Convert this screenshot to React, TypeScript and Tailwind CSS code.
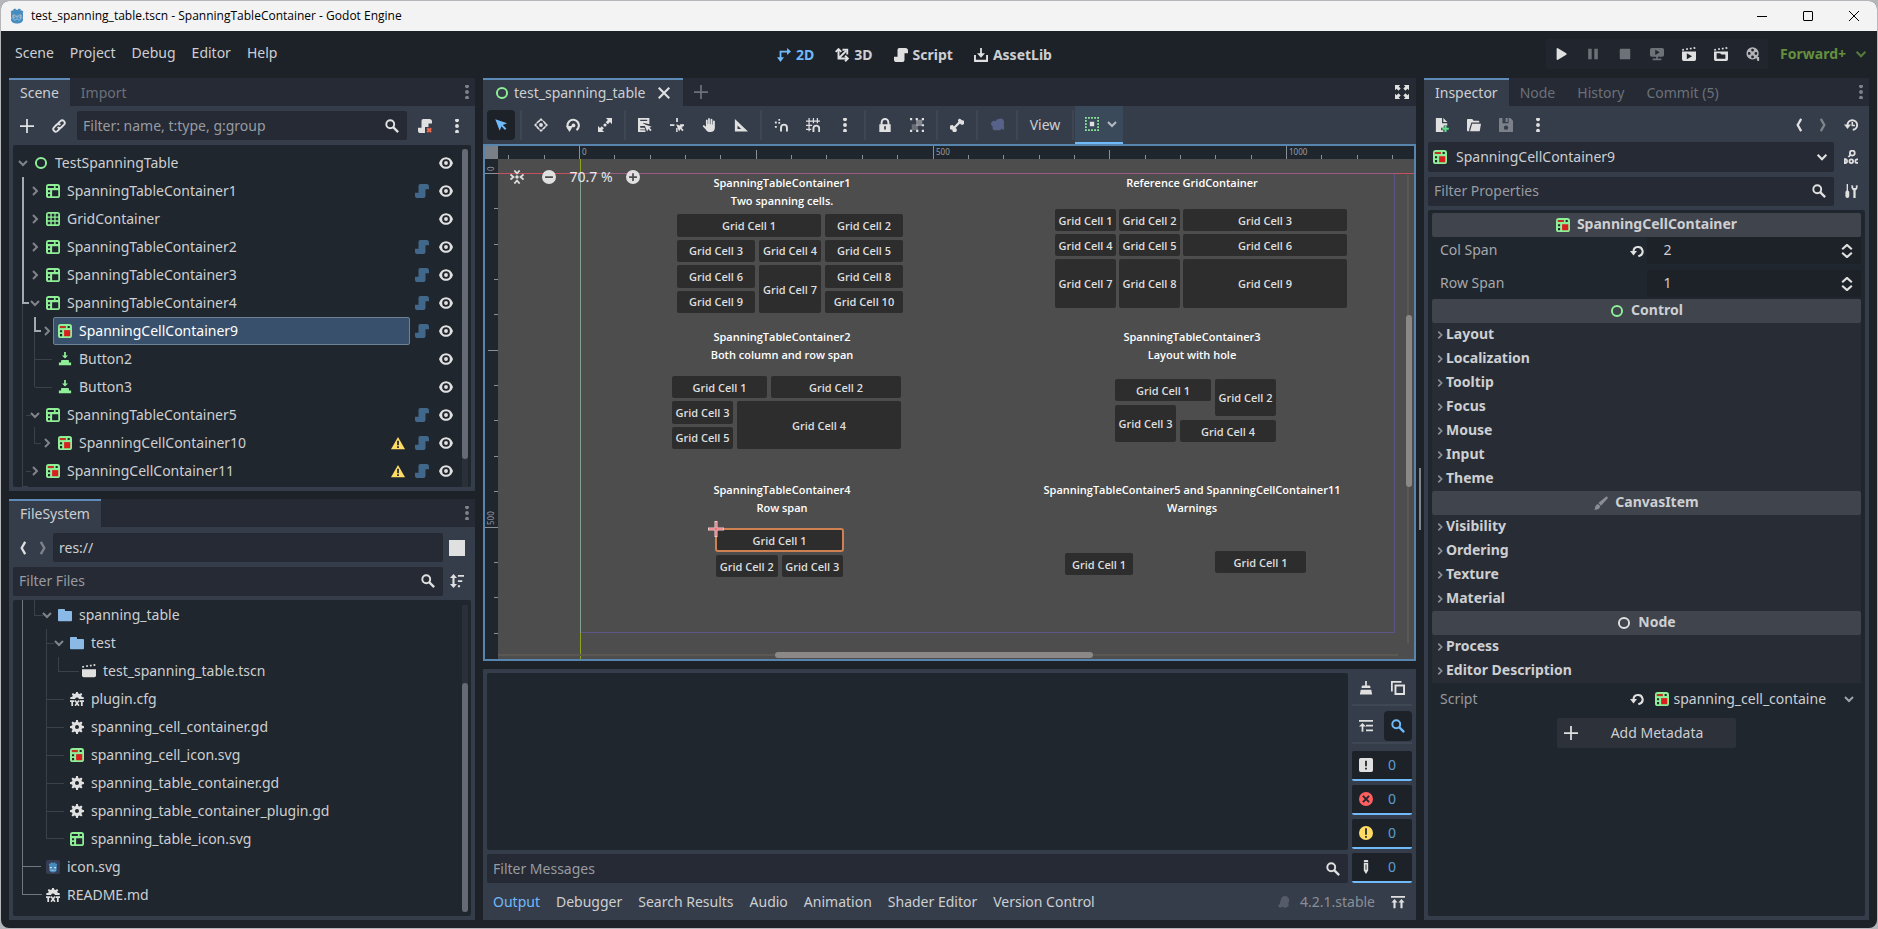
import { useState } from 'react';
import type { ReactNode } from 'react';
import clsx from 'clsx';

const GREEN = '#8eef97';
const LIGHT = '#e0e0e0';

const gear =
  'M7 0h2l.5 2.200 1.400.6 1.900-1.200 1.500 1.500-1.200 1.900.6 1.400L16 7v2l-2.300.6-.6 1.400 1.200 1.900-1.500 1.500-1.900-1.200-1.400.6L9 16H7l-.5-2.200-1.400-.6-1.900 1.200-1.500-1.500 1.200-1.900-.6-1.400L0 9V7l2.300-.6.6-1.400-1.200-1.900 1.500-1.500 1.900 1.200 1.400-.6zM8 5.700a2.300 2.300 0 1 0 0 4.600 2.300 2.300 0 0 0 0-4.600z';
const scroll = 'M6 0a2 2 0 0 0-2 2v8H0v3a3 3 0 0 0 3 3h6a3 3 0 0 0 3-3V6h4V3a3 3 0 0 0-3-3z';
const cursor = 'M7 7l3.500 8.500 1.200-3 2.600 2.600 1.300-1.300-2.600-2.600 2.700-1.200z';
const clapperTop = 'M0 2.600l2-.5.5 1.800-2 .5zM4.500 1.600l2-.4.4 1.800-2 .5zM8.800 1l2-.3.4 1.900-2 .3zM13 .4l2-.3.4 1.900-2 .3z';
const tableFrame = 'M3 0h10a3 3 0 0 1 3 3v10a3 3 0 0 1-3 3H3a3 3 0 0 1-3-3V3a3 3 0 0 1 3-3z';

const icons: Record<string, ReactNode> = {
  add: <path d="M7 0v7H0v2h7v7h2V9h7V7H9V0z" />,
  link: (
    <g fill="none" stroke="currentColor" strokeWidth="2.200" strokeLinecap="round">
      <path d="M7 5l2.600-2.600a2.900 2.900 0 0 1 4.100 4.100L10.800 9.400a2.900 2.900 0 0 1-3.600.4" />
      <path d="M9 11l-2.600 2.600a2.900 2.900 0 0 1-4.100-4.100L5.200 6.600a2.900 2.900 0 0 1 3.600-.4" />
    </g>
  ),
  search: (
    <g fill="none" stroke="currentColor">
      <circle cx="6" cy="6" r="4.500" strokeWidth="2.200" />
      <path d="M9 9l6 6" strokeWidth="2.600" />
    </g>
  ),
  scriptX: (
    <>
      <path d="M6 0a2 2 0 0 0-2 2v8H0v3a3 3 0 0 0 3 3h5V9h4V5h4V3a3 3 0 0 0-3-3z" />
      <path d="M10.500 10.500l4.500 4.500m0-4.500L10.500 15" stroke="#f0694e" strokeWidth="2.400" />
    </>
  ),
  dots: (
    <>
      <circle cx="8" cy="1.500" r="2.200" />
      <circle cx="8" cy="8" r="2.200" />
      <circle cx="8" cy="14.500" r="2.200" />
    </>
  ),
  script: <path d={scroll} />,
  eye: (
    <>
      <path
        fillRule="evenodd"
        d="M8 1.300c-3.700 0-6.700 2.500-8 6.700 1.300 4.200 4.300 6.700 8 6.700s6.700-2.500 8-6.700c-1.300-4.200-4.300-6.700-8-6.700zM8 3.600a4.400 4.400 0 1 1 0 8.800 4.400 4.400 0 0 1 0-8.800z"
      />
      <circle cx="8" cy="8" r="2.200" />
    </>
  ),
  warning: (
    <>
      <path d="M8 1L0 15h16z" fill="#ffdd65" />
      <path d="M7 5.500h2v5H7zM7 11.800h2v1.800H7z" fill="#20262d" />
    </>
  ),
  chevronDown: <path d="M3 5.500l5 5 5-5" fill="none" stroke="currentColor" strokeWidth="2.400" />,
  back: <path d="M10.500 1L6.500 8l4 7" fill="none" stroke="currentColor" strokeWidth="2.600" />,
  forward: <path d="M5.500 1l4 7-4 7" fill="none" stroke="currentColor" strokeWidth="2.600" />,
  control: <circle cx="8" cy="8" r="5.800" fill="none" stroke="currentColor" strokeWidth="2.200" />,
  table: (
    <>
      <path d={tableFrame} fill={GREEN} />
      <path d="M2 2.300h7v2.400H2zM11 2.300h2.700v2.400H11zM2.300 7h2.400v2.400H2.300zM2.300 11.500h2.400v2.400H2.300zM7 7h7v7H7z" fill="#20262d" />
    </>
  ),
  cell: (
    <>
      <path d={tableFrame} fill={GREEN} />
      <path d="M2 2.300h7v2.400H2z" fill="#c03423" />
      <path d="M11 2.300h2.400v2.400H11zM2.300 7h2.400v2.400H2.300zM2.300 11.500h2.400v2.400H2.300z" fill="#20262d" />
      <path d="M7 7h7v7H7z" fill="#d81e1e" />
    </>
  ),
  grid: (
    <>
      <path d={tableFrame} fill={GREEN} />
      <path
        d="M2 2h3v3H2zM6.500 2h3v3h-3zM11 2h3v3h-3zM2 6.500h3v3H2zM6.500 6.500h3v3h-3zM11 6.500h3v3h-3zM2 11h3v3H2zM6.500 11h3v3h-3zM11 11h3v3h-3z"
        fill="#20262d"
      />
    </>
  ),
  button: <path d="M7 0h2v4h2.500L8 7.500 4.500 4H7zM4.500 9h7a1 1 0 0 1 1 1v2h-9v-2a1 1 0 0 1 1-1zM1 12h14v3H1z" fill={GREEN} />,
  folder: <path d="M1 1h6a1 1 0 0 1 1 1v1.500h7a1 1 0 0 1 1 1V14a1 1 0 0 1-1 1H1a1 1 0 0 1-1-1V2a1 1 0 0 1 1-1z" fill="#8bb9e5" />,
  scene: (
    <>
      <path d="M0 6h16v7a2 2 0 0 1-2 2H2a2 2 0 0 1-2-2z" />
      <path d={clapperTop} />
    </>
  ),
  gear: <path d={gear} fillRule="evenodd" />,
  config: (
    <>
      <path d="M7 0h2l.4 1.800 1.600.6L12.700 1 14 2.500l-1.200 1.700.6 1.300 2.300.4V8h-5.500a2.300 2.300 0 0 0-4.400 0H.3V5.900l2.300-.4.6-1.300L2 2.500 3.300 1 5 2.400l1.600-.6z" />
      <path d="M0 9.500h5v2H3.500V16h-2v-4.500H0zM11 9.500h5v2h-1.500V16h-2v-4.500H11z" />
      <path d="M5.800 9.800l4.400 6M10.200 9.800l-4.400 6" stroke="currentColor" strokeWidth="1.800" />
    </>
  ),
  godotFile: (
    <>
      <rect width="16" height="16" rx="2" fill="#363d52" />
      <path
        d="M6.500 2.500l.8 1h1.400l.8-1 1.300.6v1.200l1.200-.3.900 1.200-.6 1v5c0 2-2.200 3-4.300 3s-4.300-1-4.300-3v-5l-.6-1L4 4l1.200.3V3.100z"
        fill="#478cbf"
      />
      <path d="M4.500 8h2v1.500h-2zM9.500 8h2v1.500h-2zM5 11h1.500v1H5zM7.300 11h1.400v1.300H7.300zM9.600 11H11v1H9.600z" fill="#dfe9f2" />
    </>
  ),
  sort: (
    <>
      <path d="M4 0l4 4.500H5.200v7H8L4 16l-4-4.500h2.800v-7H0z" />
      <path d="M9 1h7v2.200H9zM9 7h5v2.200H9zM9 12.800h2.500V15H9z" />
    </>
  ),
  twoD: <path d="M3 10.500V3h8.500V0L16 4l-4.500 4V5H5v5.500h3L4 16l-4-5.500z" />,
  threeD: (
    <g fill="none" stroke="currentColor" strokeWidth="2.200">
      <path d="M4 1.500V12h10.500M4 12l9-9" />
      <path d="M.8 4.500L4 1.300l3.200 3.200M11.500 8.800l3.200 3.200-3.200 3.200M8.500 2h5.500v5.500" />
    </g>
  ),
  assetLib: <path d="M7 0h2v6h3.500L8 11 3.500 6H7zM0 8h2.200v5.500h11.600V8H16v7a1 1 0 0 1-1 1H1a1 1 0 0 1-1-1z" />,
  play: <path d="M3 2.300v11.400a1 1 0 0 0 1.500.8l9.500-5.700a1 1 0 0 0 0-1.600L4.500 1.500A1 1 0 0 0 3 2.300z" />,
  pause: <path d="M2.500 2h4v12h-4zM9.500 2h4v12h-4z" />,
  stop: <rect x="2" y="2" width="12" height="12" rx="1" />,
  remote: (
    <path
      fillRule="evenodd"
      d="M2 1h12a2 2 0 0 1 2 2v6a2 2 0 0 1-2 2H9v2h4v2H3v-2h4v-2H2a2 2 0 0 1-2-2V3a2 2 0 0 1 2-2zM6 3v6l5-3z"
    />
  ),
  playScene: (
    <>
      <path d={clapperTop} />
      <path fillRule="evenodd" d="M0 5h16v9a2 2 0 0 1-2 2H2a2 2 0 0 1-2-2zM5.500 7v7l6-3.500z" />
    </>
  ),
  playCustom: (
    <>
      <path d={clapperTop} />
      <path fillRule="evenodd" d="M0 5h16v9a2 2 0 0 1-2 2H2a2 2 0 0 1-2-2zM3 7v6.500h10V8.500H8.500L7 7z" />
    </>
  ),
  movie: (
    <>
      <path
        fillRule="evenodd"
        d="M7.500.3a7 7 0 1 1 0 14 7 7 0 0 1 0-14zM7.500 2a1.600 1.600 0 1 0 0 3.200 1.600 1.600 0 0 0 0-3.200zM3.700 5.800a1.600 1.600 0 1 0 0 3.200 1.600 1.600 0 0 0 0-3.200zM11.300 5.800a1.600 1.600 0 1 0 0 3.200 1.600 1.600 0 0 0 0-3.200zM7.500 9.700a1.600 1.600 0 1 0 0 3.200 1.600 1.600 0 0 0 0-3.200z"
      />
      <path d="M11.500 11.500H15V16h-2z" />
    </>
  ),
  close: <path d="M2 2l12 12m0-12L2 14" stroke="currentColor" strokeWidth="2.400" />,
  expand: (
    <path d="M0 0h6L4.200 1.800 6.500 4 4 6.500 1.800 4.200 0 6zM16 0v6l-1.800-1.800L12 6.500 9.500 4l2.300-2.200L10 0zM0 16v-6l1.800 1.800L4 9.500 6.500 12l-2.300 2.200L6 16zM16 16h-6l1.800-1.800L9.500 12 12 9.500l2.200 2.300L16 10z" />
  ),
  select: <path d="M1.500 1.500l5 13 2-5 4 4.200 1.700-1.700-4.200-4 5-2z" />,
  move: (
    <>
      <circle cx="8" cy="8" r="2.200" />
      <path d="M8 0l2.800 3H5.200zM8 16l2.800-3H5.200zM0 8l3-2.800v5.600zM16 8l-3-2.800v5.600z" />
      <circle cx="8" cy="8" r="5" fill="none" stroke="currentColor" strokeWidth="1.800" strokeDasharray="4 3.850" strokeDashoffset="-1.900" />
    </>
  ),
  rotate: (
    <>
      <path d="M4 13.500A6.500 6.500 0 1 1 12 13.800" fill="none" stroke="currentColor" strokeWidth="2.400" />
      <path d="M0 9h8l-4 7z" />
      <circle cx="8.500" cy="8.500" r="2.200" />
    </>
  ),
  scale: (
    <>
      <path d="M9 0h7v7l-2.300-2.300-2.500 2.500-2.400-2.400 2.500-2.500zM0 9l2.300 2.300 2-2 2.400 2.400-2 2L7 16H0z" />
      <circle cx="8" cy="8" r="1.800" />
    </>
  ),
  listSelect: (
    <>
      <path fillRule="evenodd" d="M0 0h13v7L6 5.500v1h1.500L8.500 9H2.500v2h5l.8 2H2.500v1h6v2H0zM2.500 2v1.500h8V2z" />
      <path d={cursor} />
    </>
  ),
  pivot: (
    <>
      <path d="M7 0h2v4.500H7zM0 7h5v2H0zM11.500 7H16v2h-4.500zM7 11.500h1.700V16H7z" />
      <path d={cursor} />
    </>
  ),
  hand: (
    <path d="M7 1a1 1 0 0 1 2 0v6h.7V2a1.100 1.100 0 0 1 2.200 0v5.500h.6V4a1.100 1.100 0 0 1 2.200 0v7c0 3-2 5-5.200 5-2.500 0-4-1-5.200-3L1 9.800C.5 8.700 1.800 7.800 2.800 8.600L4.500 10V2.500a1.200 1.200 0 0 1 2 0V7H7z" />
  ),
  ruler: <path fillRule="evenodd" d="M1 1l15 14.500H1zM4 8.500v4h4.200z" />,
  snap: (
    <>
      <path d="M5 1h2v2H5zM1 4h2.200v2.200H1zM5 4.500h2v2H5zM1 9h2.200v2.200H1z" />
      <path d="M8 15.500V11a3.200 3.200 0 0 1 6.800 0v4.500" fill="none" stroke="currentColor" strokeWidth="2.200" />
    </>
  ),
  gridSnap: (
    <>
      <path d="M3.500 0v15M8.500 0v6M13 0v6M0 3.500h16M0 8.500h7M0 13h6" fill="none" stroke="currentColor" strokeWidth="1.400" />
      <path d="M8.500 16v-4a3.300 3.300 0 0 1 6.600 0v4" fill="none" stroke="currentColor" strokeWidth="2.200" />
    </>
  ),
  lock: (
    <path
      fillRule="evenodd"
      d="M8 0a5 5 0 0 0-5 5v2H1.500v9h13V7H13V5a5 5 0 0 0-5-5zm0 2.200A2.800 2.800 0 0 1 10.800 5v2H5.200V5A2.800 2.800 0 0 1 8 2.200zM7 9.500h2v3.500H7z"
    />
  ),
  group: (
    <>
      <path d="M7 2h7v7H7z" opacity=".45" />
      <path d="M2 7h7v7H2z" opacity=".3" />
      <path d="M0 0h2.500v2.500H0zM13.500 0H16v2.500h-2.500zM0 13.500h2.500V16H0zM13.500 13.500H16V16h-2.500zM6.500 0H9v2.500H6.500zM13.500 7H16v2.500h-2.500zM7 13.500h2.500V16H7z" />
    </>
  ),
  bone: (
    <path d="M10.500.8a2.600 2.600 0 0 0-.8 3.600L4.500 9.600a2.600 2.600 0 1 0-1.800 3.600 2.600 2.600 0 1 0 3.600-1.800l5.200-5.200a2.600 2.600 0 1 0 1.800-3.600A2.600 2.600 0 0 0 10.500.8z" />
  ),
  camera: (
    <path d="M10 1a4 4 0 0 0-3.700 2.700A3.200 3.200 0 1 0 3 9.500V12a2 2 0 0 0 2 2h6a2 2 0 0 0 2-2l3 2V7.500l-2.500 1.500A4 4 0 0 0 10 1z" />
  ),
  anchors: (
    <>
      <path d="M5.500 5.500h5v5h-5z" fill={LIGHT} />
      <g fill="none" stroke={GREEN} strokeWidth="2" strokeDasharray="2 1.500">
        <path d="M0 1h16M0 15h16M1 0v16M15 0v16" />
      </g>
    </>
  ),
  centerView: (
    <>
      <circle cx="8" cy="8" r="2" />
      <g fill="none" stroke="currentColor" strokeWidth="2">
        <path d="M5 .5l3 3.500 3-3.500M5 15.500L8 12l3 3.500M.5 5L4 8l-3.500 3M15.500 5L12 8l3.500 3" />
      </g>
    </>
  ),
  minus: <path fillRule="evenodd" d="M8 0a8 8 0 1 1 0 16A8 8 0 0 1 8 0zM3.500 7v2h9V7z" />,
  plus: <path fillRule="evenodd" d="M8 0a8 8 0 1 1 0 16A8 8 0 0 1 8 0zM7 3.500V7H3.500v2H7v3.500h2V9h3.500V7H9V3.500z" />,
  newFile: (
    <>
      <path d="M1 0h7v6h6v2.500h-4V11H7v3h2.500v2H1zM9.500 0L14 4.500H9.500z" />
      <path d="M10.800 8.500h2.400v2.600h2.600v2.400h-2.600V16h-2.400v-2.500H8.300v-2.400h2.500z" fill="#5fdb8a" />
    </>
  ),
  open: <path d="M1 1h5l1.500 2H13a1 1 0 0 1 1 1v1H5L2.500 13V15H1a1 1 0 0 1-1-1V2a1 1 0 0 1 1-1zM5.800 6.500H16L14.500 15H3.500z" />,
  save: (
    <path
      fillRule="evenodd"
      d="M1 0h3v6h7V0h2l3 3v12a1 1 0 0 1-1 1H1a1 1 0 0 1-1-1V1a1 1 0 0 1 1-1zM7.500 0H10v4.500H7.500zM8 8.500a2.500 2.500 0 1 0 0 5 2.500 2.500 0 0 0 0-5z"
    />
  ),
  history: (
    <>
      <path d="M4 9V8a5.500 5.500 0 1 1 6 5.500" fill="none" stroke="currentColor" strokeWidth="2.200" />
      <path d="M0 7.500h8L4 12.500z" />
      <path d="M9.500 4.500v4h3" fill="none" stroke="currentColor" strokeWidth="1.800" />
    </>
  ),
  docs: (
    <>
      <g fill="none" stroke="currentColor" strokeWidth="2">
        <circle cx="9.500" cy="3.500" r="2.800" />
        <path d="M7.500 5.500L5 8" />
      </g>
      <g fill="none" stroke="currentColor" strokeWidth="2">
        <path d="M1 10.500h.800a2.300 2.300 0 0 1 0 4.500H1zM16 10.800h-1a2 2 0 0 0 0 4h1" />
        <circle cx="8.300" cy="12.800" r="2.100" />
      </g>
    </>
  ),
  tools: (
    <>
      <path d="M3 0h1.600v7.500a2.500 2.500 0 0 1 1.400 2v4.300a2.200 2.200 0 0 1-4.400 0V9.500a2.500 2.500 0 0 1 1.400-2z" />
      <path d="M8.500 1v3a3.300 3.300 0 0 0 2.200 3V16h2.600V7a3.300 3.300 0 0 0 2.200-3V1l-2 1v2.500h-3V2z" />
    </>
  ),
  revert: (
    <>
      <path d="M4 9V8.500a5.200 5.200 0 1 1 7 5L9.500 14" fill="none" stroke="currentColor" strokeWidth="2.400" />
      <path d="M0 8h8l-4 5z" />
    </>
  ),
  updown: <path d="M2.500 6L8 1l5.500 5M2.500 10L8 15l5.500-5" fill="none" stroke="currentColor" strokeWidth="2.400" />,
  brush: (
    <path
      d="M14 .5a1.500 1.500 0 0 1 1.500 2.300L8 11 5 8zM4.500 9L7 11.500c0 3-2.500 4.500-7 4 1.500-1 1-2 1.500-3.500S3 9.500 4.500 9z"
      fill="#8a8d93"
    />
  ),
  broom: <path d="M7 0h2v5h2.500a1.500 1.500 0 0 1 1.500 1.500V8H3V6.500A1.500 1.500 0 0 1 4.500 5H7zM2 10h12l1 5.500H1z" />,
  copy: <path fillRule="evenodd" d="M0 0h12v2H2v10H0zM4 4h12v12H4zM6.200 6.200v7.600h7.600V6.200z" />,
  collapse: <path d="M0 1h16v2.200H0zM8 6.500h8v2H8zM8 12h8v2H8zM3 14.500V8.500H0L4 4.500l4 4H5v6z" />,
  msgStd: (
    <path fillRule="evenodd" d="M2 0h12a2 2 0 0 1 2 2v12a2 2 0 0 1-2 2H2a2 2 0 0 1-2-2V2a2 2 0 0 1 2-2zM7 3v6.500h2V3zM7 11v2h2v-2z" />
  ),
  msgError: (
    <>
      <circle cx="8" cy="8" r="8" fill="#ff5f5f" />
      <path d="M4.500 4.500l7 7m0-7l-7 7" stroke="#20262d" strokeWidth="2.200" />
    </>
  ),
  msgWarn: (
    <>
      <circle cx="8" cy="8" r="8" fill="#ffdd65" />
      <path d="M7 2.500h2V10H7zM7 11.500h2v2H7z" fill="#20262d" />
    </>
  ),
  msgEdit: (
    <path fillRule="evenodd" d="M6.500 0h3a1 1 0 0 1 1 1v1.500h-5V1a1 1 0 0 1 1-1zM5.500 3.500h5V12L8 16l-2.500-4zM7.500 5v6h1V5z" />
  ),
  bell: <path d="M9 1c2.500 0 4.500 2 5 4l-1 5 .5 2.500-5 2.500-1-1.500-4.500 1L1 12l2-1.500L4.500 5C5 2.500 6.500 1 9 1z" />,
  expandBottom: <path d="M0 1h16v2.200H0zM4 4.500l3.500 4H5.200v6.500H2.800V8.500H.5zM12 4.500l3.500 4h-2.300v6.500h-2.400V8.500H8.500z" />,
};

function Icon({ name, className = 'text-[#e0e0e0]' }: { name: string; className?: string }) {
  return (
    <svg viewBox="0 0 16 16" fill="currentColor" aria-hidden="true" className={clsx('size-[14px] shrink-0', className)}>
      {icons[name]}
    </svg>
  );
}

function IconButton({ name, label, className, iconClass }: { name: string; label: string; className?: string; iconClass?: string }) {
  return (
    <button aria-label={label} className={clsx('flex h-[30px] w-7 shrink-0 items-center justify-center rounded-sm', className)}>
      <Icon name={name} className={iconClass} />
    </button>
  );
}

function SearchField({ id, placeholder }: { id: string; placeholder: string }) {
  return (
    <label htmlFor={id} className="flex h-[29px] min-w-0 flex-1 items-center rounded-xs bg-[#252a34] pr-2 pl-1.5">
      <input
        id={id}
        type="text"
        placeholder={placeholder}
        aria-label={placeholder}
        className="min-w-0 flex-1 bg-transparent outline-none placeholder:text-[#989ba1]"
      />
      <Icon name="search" />
    </label>
  );
}

function DockTabs({ tabs }: { tabs: string[] }) {
  const [active, setActive] = useState(tabs[0]);
  return (
    <div className="flex h-7 shrink-0 items-stretch bg-[#252a34]">
      {tabs.map((tab) => (
        <button
          key={tab}
          onClick={() => setActive(tab)}
          className={clsx(
            'border-t-2 px-[11px] pb-px',
            tab === active ? 'border-[#5f8bb8] bg-[#363d4a] text-[#cdcfd2]' : 'border-transparent text-[#6c7179]',
          )}
        >
          {tab}
        </button>
      ))}
      <button aria-label="Dock menu" className="ml-auto flex w-4 items-center justify-center">
        <Icon name="dots" className="text-[#7f838a]" />
      </button>
    </div>
  );
}

interface TreeItem {
  label: string;
  icon: string;
  depth: number;
  arrow?: 'open' | 'closed';
  script?: boolean;
  warning?: boolean;
  selected?: boolean;
}

const sceneTree: TreeItem[] = [
  { label: 'TestSpanningTable', icon: 'control', depth: 0, arrow: 'open' },
  { label: 'SpanningTableContainer1', icon: 'table', depth: 1, arrow: 'closed', script: true },
  { label: 'GridContainer', icon: 'grid', depth: 1, arrow: 'closed' },
  { label: 'SpanningTableContainer2', icon: 'table', depth: 1, arrow: 'closed', script: true },
  { label: 'SpanningTableContainer3', icon: 'table', depth: 1, arrow: 'closed', script: true },
  { label: 'SpanningTableContainer4', icon: 'table', depth: 1, arrow: 'open', script: true },
  { label: 'SpanningCellContainer9', icon: 'cell', depth: 2, arrow: 'closed', script: true, selected: true },
  { label: 'Button2', icon: 'button', depth: 2 },
  { label: 'Button3', icon: 'button', depth: 2 },
  { label: 'SpanningTableContainer5', icon: 'table', depth: 1, arrow: 'open', script: true },
  { label: 'SpanningCellContainer10', icon: 'cell', depth: 2, arrow: 'closed', script: true, warning: true },
  { label: 'SpanningCellContainer11', icon: 'cell', depth: 1, arrow: 'closed', script: true, warning: true },
];

const fileTree: TreeItem[] = [
  { label: 'spanning_table', icon: 'folder', depth: 2, arrow: 'open' },
  { label: 'test', icon: 'folder', depth: 3, arrow: 'open' },
  { label: 'test_spanning_table.tscn', icon: 'scene', depth: 4 },
  { label: 'plugin.cfg', icon: 'config', depth: 3 },
  { label: 'spanning_cell_container.gd', icon: 'gear', depth: 3 },
  { label: 'spanning_cell_icon.svg', icon: 'cell', depth: 3 },
  { label: 'spanning_table_container.gd', icon: 'gear', depth: 3 },
  { label: 'spanning_table_container_plugin.gd', icon: 'gear', depth: 3 },
  { label: 'spanning_table_icon.svg', icon: 'table', depth: 3 },
  { label: 'icon.svg', icon: 'godotFile', depth: 1 },
  { label: 'README.md', icon: 'config', depth: 1 },
];

function TreeRow({ item, tools }: { item: TreeItem; tools?: boolean }) {
  return (
    <li className="flex h-7 items-center" style={{ paddingLeft: 4 + item.depth * 12 }}>
      <span className="flex w-3 shrink-0 justify-center">
        {item.arrow && (
          <svg viewBox="0 0 12 12" className="size-3 text-[#80858c]" fill="none" stroke="currentColor" strokeWidth="2">
            <path d={item.arrow === 'open' ? 'M2 4l4 4 4-4' : 'M4 2l4 4-4 4'} />
          </svg>
        )}
      </span>
      <button
        className={clsx(
          'flex h-7 min-w-0 flex-1 items-center gap-[7px] rounded-xs border pl-1 whitespace-nowrap',
          item.selected ? 'border-[#6d8195] bg-[#38506b] text-white' : 'border-transparent',
        )}
      >
        <Icon name={item.icon} className={item.icon === 'control' ? 'text-[#8eef97]' : undefined} />
        <span>{item.label}</span>
        {item.warning && (
          <span className="mr-1 ml-auto">
            <Icon name="warning" />
          </span>
        )}
      </button>
      {tools && (
        <span className="flex w-[52px] shrink-0 items-center gap-2.5 pl-[5px]">
          {item.script ? <Icon name="script" className="text-[#41688b]" /> : <span className="w-[14px]" />}
          <Icon name="eye" />
        </span>
      )}
    </li>
  );
}

function SceneDock() {
  return (
    <section className="flex h-[413px] shrink-0 flex-col">
      <DockTabs tabs={['Scene', 'Import']} />
      <div className="flex min-h-0 flex-1 flex-col bg-[#363d4a] px-1 pb-1">
        <div className="flex h-[39px] shrink-0 items-center gap-1">
          <IconButton name="add" label="Add node" />
          <IconButton name="link" label="Instantiate scene" />
          <SearchField id="filter-nodes" placeholder="Filter: name, t:type, g:group" />
          <IconButton name="scriptX" label="Detach script" />
          <IconButton name="dots" label="Scene menu" />
        </div>
        <div className="relative flex min-h-0 flex-1 rounded-xs bg-[#20262d] pt-1">
          <svg className="pointer-events-none absolute inset-0 size-full" fill="none" shapeRendering="crispEdges">
            <g stroke="#3b4149">
              <path d="M9.500 158V342M13 270h5M13 326h5M21.500 186v56M22 214h17M22 242h17M21.500 282v16h6M9 341.500h6" />
            </g>
            <g stroke="#a5a9af" strokeWidth="2">
              <path d="M10 32v126h6M22 172v14h6" />
            </g>
          </svg>
          <ul className="min-w-0 flex-1 overflow-hidden">
            {sceneTree.map((item) => (
              <TreeRow key={item.label} item={item} tools />
            ))}
          </ul>
          <div className="mr-[3px] w-[6px] bg-[#2a3038]">
            <div className="h-[310px] rounded-sm bg-[#666b73]" />
          </div>
        </div>
      </div>
    </section>
  );
}

function FileSystemDock() {
  return (
    <section className="flex min-h-0 flex-1 flex-col">
      <DockTabs tabs={['FileSystem']} />
      <div className="flex min-h-0 flex-1 flex-col gap-1 bg-[#363d4a] px-1 pt-1.5 pb-1">
        <div className="flex items-center">
          <button aria-label="Back" className="flex w-5 justify-center">
            <Icon name="back" />
          </button>
          <button aria-label="Forward" className="flex w-5 justify-center">
            <Icon name="forward" className="text-[#80858c]" />
          </button>
          <input
            type="text"
            aria-label="Path"
            defaultValue="res://"
            className="h-[29px] min-w-0 flex-1 rounded-xs bg-[#252a34] px-1.5 outline-none"
          />
          <button aria-label="Toggle split mode" className="mr-1.5 ml-1.5 size-4 bg-[#e0e0e0]" />
        </div>
        <div className="flex items-center">
          <SearchField id="filter-files" placeholder="Filter Files" />
          <IconButton name="sort" label="Sort files" />
        </div>
        <div className="relative flex min-h-0 flex-1 rounded-xs bg-[#20262d] pt-px">
          <svg className="pointer-events-none absolute inset-0 size-full" fill="none" shapeRendering="crispEdges">
            <g stroke="#3b4149">
              <path d="M21.500 0v15h8M33.500 29v209M33 43h8M45.500 57v14h20M33 99h18M33 127h18M33 155h18M33 183h18M33 211h18M33 238.500h18" />
            </g>
            <path d="M9.500 0v294.500h19M9 266.500h19" stroke="#72767d" />
          </svg>
          <ul className="min-w-0 flex-1 overflow-hidden">
            {fileTree.map((item) => (
              <TreeRow key={item.label} item={item} />
            ))}
          </ul>
          <div className="mt-1 mr-[3px] mb-1 flex w-[6px] flex-col justify-end bg-[#2a3038]">
            <div className="h-[229px] rounded-sm bg-[#666b73]" />
          </div>
        </div>
      </div>
    </section>
  );
}

// Canvas view: 1000 scene units take up 707 px.
const UNIT = 0.707;
const ORIGIN_X = 82;
const ORIGIN_Y = 14;

function TopRuler() {
  const marks = Array.from({ length: 26 }, (_, i) => (i - 2) * 50);
  return (
    <svg className="h-[13px] min-w-0 flex-1 bg-[#1f262d]" shapeRendering="crispEdges">
      {marks.map((m) => {
        const x = Math.round(ORIGIN_X + m * UNIT) - 0.5;
        const top = m % 500 === 0 ? 0 : m % 250 === 0 ? 4 : 9;
        return <path key={m} d={`M${x} ${top}V13`} stroke="#8a9097" />;
      })}
      {[0, 500, 1000].map((m) => (
        <text key={m} x={Math.round(ORIGIN_X + m * UNIT) + 2} y="9" fontSize="8" fill="#9a9fa5">
          {m}
        </text>
      ))}
    </svg>
  );
}

function LeftRuler() {
  const marks = Array.from({ length: 14 }, (_, i) => i * 50);
  return (
    <svg className="w-[13px] shrink-0 bg-[#1f262d]" shapeRendering="crispEdges">
      {marks.map((m) => {
        const y = Math.round(ORIGIN_Y + m * UNIT) + 0.5;
        const left = m % 500 === 0 ? 0 : m % 250 === 0 ? 3 : 9;
        return <path key={m} d={`M${left} ${y}H13`} stroke="#8a9097" />;
      })}
      {[0, 500].map((m) => {
        const y = Math.round(ORIGIN_Y + m * UNIT) - 2;
        return (
          <text key={m} x="9" y={y} fontSize="8" fill="#9a9fa5" transform={`rotate(-90 9 ${y})`}>
            {m}
          </text>
        );
      })}
    </svg>
  );
}

function Cell({ n, className }: { n: number; className?: string }) {
  return (
    <button className={clsx('flex items-center justify-center rounded-xs bg-[#2d2d2d] pt-px whitespace-nowrap text-[#dfdfdf]', className)}>
      Grid Cell {n}
    </button>
  );
}

function Caption({ lines, className }: { lines: string[]; className: string }) {
  return (
    <div className={clsx('absolute w-80 text-center leading-[18px] text-white', className)}>
      {lines.map((line) => (
        <p key={line}>{line}</p>
      ))}
    </div>
  );
}

function Canvas() {
  return (
    <div className="relative min-w-0 flex-1 overflow-hidden bg-[#4d4d4d] font-['Open_Sans',sans-serif] text-[11px] font-semibold">
      <div className="absolute top-[14px] left-[82px] h-[460px] w-[815px] border border-[#5d5585]" />
      <div className="absolute top-[14px] right-0 left-0 h-px bg-[#c8505c]" />
      <div className="absolute top-[14px] left-[82px] h-px w-[815px] bg-[#9c5a86]" />
      <div className="absolute top-0 bottom-0 left-[82px] w-px bg-[#8fa41f]" />
      <div className="absolute top-[14px] left-[82px] h-[460px] w-px bg-[#84a090]" />

      <Caption className="top-[15px] left-[124px]" lines={['SpanningTableContainer1', 'Two spanning cells.']} />
      <div className="absolute top-[55px] left-[179px] grid h-[99px] w-[226px] grid-cols-[78px_62px_78px] grid-rows-4 gap-x-1 gap-y-[3px]">
        <Cell n={1} className="col-span-2" />
        <Cell n={2} />
        <Cell n={3} />
        <Cell n={4} />
        <Cell n={5} />
        <Cell n={6} />
        <Cell n={7} className="row-span-2" />
        <Cell n={8} />
        <Cell n={9} />
        <Cell n={10} />
      </div>

      <Caption className="top-[15px] left-[534px]" lines={['Reference GridContainer']} />
      <div className="absolute top-[50px] left-[557px] grid w-[292px] grid-cols-[61px_61px_164px] grid-rows-[22px_22px_49px] gap-[3px]">
        {[1, 2, 3, 4, 5, 6, 7, 8, 9].map((n) => (
          <Cell key={n} n={n} />
        ))}
      </div>

      <Caption className="top-[169px] left-[124px]" lines={['SpanningTableContainer2', 'Both column and row span']} />
      <div className="absolute top-[217px] left-[174px] grid h-[73px] w-[229px] grid-cols-[61px_30px_130px] grid-rows-3 gap-x-1 gap-y-[3px]">
        <Cell n={1} className="col-span-2" />
        <Cell n={2} />
        <Cell n={3} />
        <Cell n={4} className="col-span-2 row-span-2" />
        <Cell n={5} />
      </div>

      <Caption className="top-[169px] left-[534px]" lines={['SpanningTableContainer3', 'Layout with hole']} />
      <div className="absolute top-[220px] left-[617px] grid w-[161px] grid-cols-[61px_31px_61px] grid-rows-[22px_11px_22px] gap-1">
        <Cell n={1} className="col-span-2" />
        <Cell n={2} className="row-span-2" />
        <Cell n={3} className="row-span-2" />
        <Cell n={4} className="col-span-2 col-start-2 row-start-3" />
      </div>

      <Caption className="top-[322px] left-[124px]" lines={['SpanningTableContainer4', 'Row span']} />
      <div className="absolute top-[370px] left-[218px] grid w-[127px] grid-cols-2 grid-rows-[22px_22px] gap-1">
        <Cell n={1} className="col-span-2 outline-2 -outline-offset-1 outline-[#cf8152]" />
        <Cell n={2} />
        <Cell n={3} />
      </div>
      <svg viewBox="0 0 16 16" className="absolute top-[362px] left-[210px] size-4">
        <path d="M6.500 0h3v6.500H16v3H9.500V16h-3V9.500H0v-3h6.500z" fill="#f3c9c9" />
        <path d="M8 1v14M1 8h14" stroke="#e85b63" />
      </svg>

      <Caption className="top-[322px] left-[534px]" lines={['SpanningTableContainer5 and SpanningCellContainer11', 'Warnings']} />
      <Cell n={1} className="absolute top-[394px] left-[567px] h-[22px] w-[68px]" />
      <Cell n={1} className="absolute top-[392px] left-[717px] h-[22px] w-[91px]" />

      <div className="absolute top-[11px] left-3 flex items-center font-['Noto_Sans',sans-serif] text-sm font-normal text-[#e8e8e8]">
        <button aria-label="Center view">
          <Icon name="centerView" />
        </button>
        <button aria-label="Zoom out" className="ml-[18px]">
          <Icon name="minus" />
        </button>
        <button className="w-[70px] text-center leading-[14px]">70.7 %</button>
        <button aria-label="Zoom in">
          <Icon name="plus" />
        </button>
      </div>

      <div className="absolute top-4 right-[3px] bottom-4 flex w-[6px] justify-center">
        <div className="w-0.5 bg-[#5b5753]" />
      </div>
      <div className="absolute top-[156px] right-[2px] h-[172px] w-[6px] rounded-sm bg-[#8b8887]" />
      <div className="absolute right-4 bottom-[3px] left-0 h-0.5 bg-[#5b5753]" />
      <div className="absolute bottom-px left-[277px] h-[6px] w-[318px] rounded-sm bg-[#8b8887]" />
    </div>
  );
}

function ToolSeparator() {
  return <div className="mx-[5px] h-[30px] w-0.5 shrink-0 bg-[#3f4653]" />;
}

function CanvasToolbar() {
  return (
    <div className="flex h-[38px] shrink-0 items-center bg-[#363d4a] pl-1">
      <IconButton name="select" label="Select mode" className="bg-[#1d2229]" iconClass="text-[#70bafa]" />
      <ToolSeparator />
      <div className="flex gap-1">
        <IconButton name="move" label="Move mode" />
        <IconButton name="rotate" label="Rotate mode" />
        <IconButton name="scale" label="Scale mode" />
      </div>
      <ToolSeparator />
      <div className="flex gap-1">
        <IconButton name="listSelect" label="Show list of selectable nodes" />
        <IconButton name="pivot" label="Change pivot" />
        <IconButton name="hand" label="Pan mode" />
        <IconButton name="ruler" label="Ruler mode" />
      </div>
      <ToolSeparator />
      <div className="flex gap-1">
        <IconButton name="snap" label="Smart snap" />
        <IconButton name="gridSnap" label="Grid snap" />
        <IconButton name="dots" label="Snapping options" />
      </div>
      <ToolSeparator />
      <div className="flex gap-1">
        <IconButton name="lock" label="Lock" />
        <IconButton name="group" label="Group" />
      </div>
      <ToolSeparator />
      <IconButton name="bone" label="Skeleton options" />
      <ToolSeparator />
      <IconButton name="camera" label="Project camera override" iconClass="text-[#56628a]" />
      <ToolSeparator />
      <button className="h-[30px] w-11">View</button>
      <ToolSeparator />
      <button
        aria-label="Anchor presets"
        className="-ml-1 flex h-[38px] w-12 items-center justify-center gap-2 border-b-2 border-[#70bafa] bg-[#3b4a5a] pl-1"
      >
        <Icon name="anchors" />
        <svg viewBox="0 0 10 10" className="size-2.5" fill="none" stroke="#b4bac1" strokeWidth="2">
          <path d="M1 3l4 4 4-4" />
        </svg>
      </button>
    </div>
  );
}

function SceneView() {
  return (
    <section className="flex min-h-0 flex-1 flex-col">
      <div className="flex h-7 shrink-0 items-stretch bg-[#252a34]">
        <button className="flex items-center border-t-2 border-[#5f8bb8] bg-[#363d4a] pb-px pl-3">
          <Icon name="control" className="text-[#8eef97]" />
          <span className="pl-[5px]">test_spanning_table</span>
        </button>
        <button aria-label="Close tab" className="flex w-[37px] items-center justify-center border-t-2 border-[#5f8bb8] bg-[#363d4a] pb-px">
          <Icon name="close" />
        </button>
        <button aria-label="New scene" className="flex w-9 items-center justify-center">
          <Icon name="add" className="text-[#6c7179]" />
        </button>
        <button aria-label="Distraction free mode" className="ml-auto flex w-7 items-center justify-center">
          <Icon name="expand" />
        </button>
      </div>
      <CanvasToolbar />
      <div className="flex min-h-0 flex-1 flex-col border-2 border-[#5785ad]">
        <div className="flex shrink-0">
          <div className="w-[13px] bg-[#798088]" />
          <TopRuler />
        </div>
        <div className="flex min-h-0 flex-1">
          <LeftRuler />
          <Canvas />
        </div>
      </div>
    </section>
  );
}

const bottomTabs = ['Output', 'Debugger', 'Search Results', 'Audio', 'Animation', 'Shader Editor', 'Version Control'];
const counters = ['msgStd', 'msgError', 'msgWarn', 'msgEdit'];

function OutputPanel() {
  return (
    <section className="flex h-[251px] shrink-0 flex-col bg-[#363d4a]">
      <div className="flex min-h-0 flex-1 gap-1 px-1 pt-1">
        <div className="flex min-w-0 flex-1 flex-col gap-1">
          <div className="flex-1 rounded-xs bg-[#20262d]" />
          <div className="flex">
            <SearchField id="filter-messages" placeholder="Filter Messages" />
          </div>
        </div>
        <div className="flex w-[60px] flex-col">
          <div className="flex h-[26px] gap-1">
            <IconButton name="broom" label="Clear output" className="h-[26px]" />
            <IconButton name="copy" label="Copy selection" className="h-[26px]" />
          </div>
          <div className="my-[5px] h-0.5 bg-[#404754]" />
          <div className="flex h-[26px] gap-1">
            <IconButton name="collapse" label="Collapse duplicates" className="h-[26px]" />
            <IconButton name="search" label="Focus search" className="h-[26px] bg-[#1d2229]" iconClass="text-[#70bafa]" />
          </div>
          <div className="my-[5px] h-0.5 bg-[#404754]" />
          <div className="mt-auto flex flex-col gap-1">
            {counters.map((name) => (
              <button
                key={name}
                className="flex h-[30px] items-center gap-[15px] rounded-xs border-b-2 border-[#70bafa] bg-[#1d2229] pl-[7px] text-[#5f9dd3]"
              >
                <Icon name={name} />
                <span>0</span>
              </button>
            ))}
          </div>
        </div>
      </div>
      <div className="flex h-[37px] shrink-0 items-center gap-4 pr-[11px] pl-2.5">
        {bottomTabs.map((tab, i) => (
          <button key={tab} className={i === 0 ? 'text-[#70bafa]' : undefined}>
            {tab}
          </button>
        ))}
        <span className="ml-auto flex items-center gap-[9px] text-[#8a8f97]">
          <Icon name="bell" className="text-[#555c68]" />
          <a href="#version">4.2.1.stable</a>
        </span>
        <button aria-label="Expand bottom panel">
          <Icon name="expandBottom" />
        </button>
      </div>
    </section>
  );
}

function Category({ icon, iconClass, title }: { icon: string; iconClass?: string; title: string }) {
  return (
    <h2 className="flex h-6 items-center justify-center gap-[7px] rounded-xs bg-[#40444d] font-bold">
      <Icon name={icon} className={iconClass} />
      <span className="pb-0.5">{title}</span>
    </h2>
  );
}

function Sections({ names }: { names: string[] }) {
  return (
    <div className="bg-[#282d35]">
      {names.map((name) => (
        <button key={name} className="flex h-6 w-full items-center gap-0.5 pl-1 font-bold">
          <svg viewBox="0 0 8 12" className="h-2.5 w-2 text-[#8c9096]" fill="none" stroke="currentColor" strokeWidth="2">
            <path d="M2 2l4 4-4 4" />
          </svg>
          <span className="pb-0.5">{name}</span>
        </button>
      ))}
    </div>
  );
}

function NumberProperty({ id, label, value, revert }: { id: string; label: string; value: string; revert?: boolean }) {
  return (
    <div className="flex h-[27px] items-center">
      <label htmlFor={id} className="flex w-1/2 items-center pr-[3px] pl-2 text-[#a5a8ac]">
        <span className="flex-1 pb-0.5">{label}</span>
        {revert && <Icon name="revert" />}
      </label>
      <div className="flex h-full w-1/2 items-center rounded-xs bg-[#1d2229] pr-[7px] pl-[17px]">
        <input id={id} type="text" inputMode="numeric" defaultValue={value} className="min-w-0 flex-1 bg-transparent pb-0.5 outline-none" />
        <Icon name="updown" />
      </div>
    </div>
  );
}

function Inspector() {
  return (
    <section className="flex w-[445px] shrink-0 flex-col">
      <DockTabs tabs={['Inspector', 'Node', 'History', 'Commit (5)']} />
      <div className="flex min-h-0 flex-1 flex-col bg-[#363d4a] px-1 pb-1">
        <div className="flex h-9 shrink-0 items-center gap-1 pt-0.5">
          <IconButton name="newFile" label="New resource" />
          <IconButton name="open" label="Load resource" />
          <IconButton name="save" label="Save resource" iconClass="text-[#7b8089]" />
          <IconButton name="dots" label="Resource options" />
          <button aria-label="Previous object" className="ml-auto flex w-5 justify-center">
            <Icon name="back" />
          </button>
          <button aria-label="Next object" className="flex w-5 justify-center">
            <Icon name="forward" className="text-[#80858c]" />
          </button>
          <IconButton name="history" label="Object history" />
        </div>
        <div className="flex shrink-0 items-center gap-[3px]">
          <div className="relative h-[30px] min-w-0 flex-1">
            <select aria-label="Edited object" className="size-full appearance-none rounded-xs bg-[#252a34] pl-7 outline-none">
              <option>SpanningCellContainer9</option>
            </select>
            <span className="pointer-events-none absolute inset-y-0 left-[5px] flex items-center">
              <Icon name="cell" />
            </span>
            <span className="pointer-events-none absolute inset-y-0 right-[5px] flex items-center">
              <Icon name="chevronDown" />
            </span>
          </div>
          <IconButton name="docs" label="Open documentation" />
        </div>
        <div className="mt-1 flex shrink-0 items-center gap-[3px]">
          <SearchField id="filter-properties" placeholder="Filter Properties" />
          <IconButton name="tools" label="Manage properties" />
        </div>
        <div className="mt-1 min-h-0 flex-1 overflow-hidden rounded-xs bg-[#20262d] px-1 pt-[3px]">
          <Category icon="cell" title="SpanningCellContainer" />
          <div className="flex h-[62px] flex-col gap-1.5">
            <NumberProperty id="col-span" label="Col Span" value="2" revert />
            <NumberProperty id="row-span" label="Row Span" value="1" />
          </div>
          <Category icon="control" iconClass="text-[#8eef97]" title="Control" />
          <Sections names={['Layout', 'Localization', 'Tooltip', 'Focus', 'Mouse', 'Input', 'Theme']} />
          <Category icon="brush" title="CanvasItem" />
          <Sections names={['Visibility', 'Ordering', 'Texture', 'Material']} />
          <Category icon="control" title="Node" />
          <Sections names={['Process', 'Editor Description']} />
          <div className="mt-px flex h-[30px] items-center">
            <div className="flex w-1/2 items-center pr-[3px] pl-2 text-[#96999e]">
              <span className="flex-1">Script</span>
              <Icon name="revert" />
            </div>
            <button className="flex w-1/2 items-center gap-[5px] pr-[7px] pl-2">
              <Icon name="cell" />
              <span className="flex-1 text-left">spanning_cell_containe</span>
              <svg viewBox="0 0 10 10" className="size-2.5" fill="none" stroke="#a0a4aa" strokeWidth="2">
                <path d="M1 3l4 4 4-4" />
              </svg>
            </button>
          </div>
          <button className="mx-auto mt-1 flex h-[30px] w-[179px] items-center rounded-xs bg-[#2d3139] pl-[7px]">
            <Icon name="add" />
            <span className="flex-1 text-center">Add Metadata</span>
          </button>
        </div>
      </div>
    </section>
  );
}

function TitleBar() {
  return (
    <header className="flex h-[30px] shrink-0 items-center bg-[#f3f3f3] pl-2 text-xs text-black">
      <svg viewBox="0 0 16 16" className="size-4">
        <path
          d="M6.200.5l1 1.300h1.600l1-1.300 1.900.8v1.500l1.200-.6 1.500 1.500-.8 1.500.4.2v6.100c0 2.600-2.800 4-6 4s-6-1.400-6-4V5.400l.4-.2-.8-1.500 1.500-1.500 1.200.6V1.300z"
          fill="#478cbf"
        />
        <path d="M2 10h2.500l.5 2h2v-1.200h2V12h2l.5-2H14" fill="none" stroke="#9cc4e4" strokeWidth=".7" />
        <circle cx="5" cy="8" r="1.500" fill="#e8f1f8" />
        <circle cx="11" cy="8" r="1.500" fill="#e8f1f8" />
        <circle cx="5.100" cy="8.100" r=".8" fill="#414042" />
        <circle cx="10.900" cy="8.100" r=".8" fill="#414042" />
        <path d="M7.600 7.400h.8v2h-.8z" fill="#e8f1f8" />
      </svg>
      <h1 className="ml-1.5 font-['Open_Sans',sans-serif]">test_spanning_table.tscn - SpanningTableContainer - Godot Engine</h1>
      <div className="ml-auto flex">
        <button aria-label="Minimize" className="flex h-[30px] w-[46px] items-center justify-center">
          <span className="h-px w-2.5 bg-black" />
        </button>
        <button aria-label="Maximize" className="flex h-[30px] w-[46px] items-center justify-center">
          <span className="size-2.5 rounded-[1px] border border-black" />
        </button>
        <button aria-label="Close" className="flex h-[30px] w-[46px] items-center justify-center">
          <svg viewBox="0 0 10 10" className="size-2.5" stroke="black">
            <path d="M0 0l10 10M10 0L0 10" />
          </svg>
        </button>
      </div>
    </header>
  );
}

const workspaces = [
  { label: '2D', icon: 'twoD' },
  { label: '3D', icon: 'threeD' },
  { label: 'Script', icon: 'script' },
  { label: 'AssetLib', icon: 'assetLib' },
];

function MenuBar() {
  const [workspace, setWorkspace] = useState('2D');
  return (
    <div className="grid h-[47px] shrink-0 grid-cols-[1fr_auto_1fr] items-center pr-[9px]">
      <nav className="flex gap-4 pb-[3px] pl-3.5">
        {['Scene', 'Project', 'Debug', 'Editor', 'Help'].map((item) => (
          <button key={item}>{item}</button>
        ))}
      </nav>
      <div className="flex gap-[21px] pr-10 font-bold">
        {workspaces.map(({ label, icon }) => (
          <button
            key={label}
            onClick={() => setWorkspace(label)}
            className={clsx('flex items-center gap-[5px]', label === workspace ? 'text-[#70bafa]' : 'text-[#cdcfd2]')}
          >
            <Icon name={icon} className={label === workspace ? 'text-[#70bafa]' : undefined} />
            {label}
          </button>
        ))}
      </div>
      <div className="flex items-center justify-end pb-px">
        <div className="flex gap-1 rounded-xs bg-[#21262e] px-px">
          <IconButton name="play" label="Run project" />
          <IconButton name="pause" label="Pause" iconClass="text-[#6d7178]" />
          <IconButton name="stop" label="Stop" iconClass="text-[#6d7178]" />
          <IconButton name="remote" label="Remote debug" iconClass="text-[#6d7178]" />
          <IconButton name="playScene" label="Run current scene" />
          <IconButton name="playCustom" label="Run specific scene" />
          <IconButton name="movie" label="Movie maker mode" iconClass="text-[#b3b5b9]" />
        </div>
        <button className="ml-3 flex items-center gap-2 font-bold text-[#64903e]">
          Forward+
          <Icon name="chevronDown" className="text-[#557a3b]" />
        </button>
      </div>
    </div>
  );
}

export default function App() {
  return (
    <div className="h-screen bg-[#b4b6b9] p-px">
      <div className="flex h-full flex-col overflow-hidden rounded-lg bg-[#1d2229] font-['Noto_Sans',sans-serif] text-sm text-[#cdcfd2]">
        <TitleBar />
        <MenuBar />
        <main className="flex min-h-0 flex-1 gap-2 px-2 pb-2">
          <div className="flex w-[466px] shrink-0 flex-col gap-2">
            <SceneDock />
            <FileSystemDock />
          </div>
          <div className="relative flex min-w-0 flex-1 flex-col gap-2">
            <SceneView />
            <OutputPanel />
            <div className="absolute top-[390px] -right-[5px] h-[62px] w-0.5 bg-[#7f868c]" />
          </div>
          <Inspector />
        </main>
      </div>
    </div>
  );
}
